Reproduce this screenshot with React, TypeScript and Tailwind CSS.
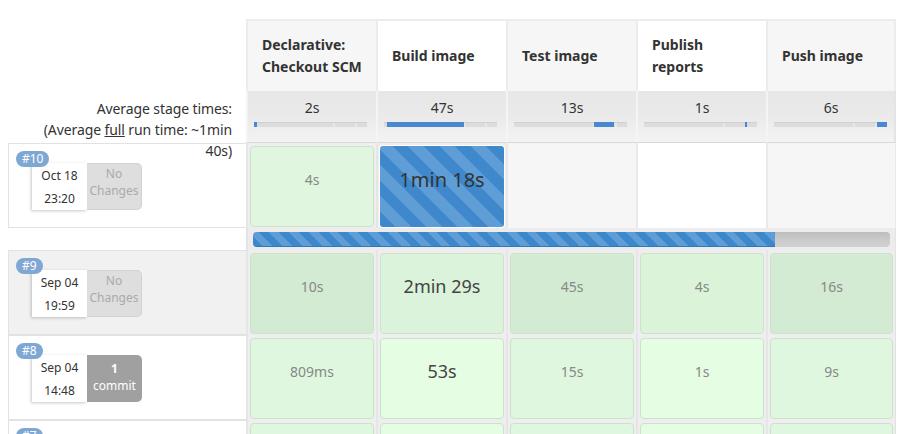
import React from 'react';

const FONT = { fontFamily: '"Noto Sans", "Open Sans", sans-serif' };

const BAR_STRIPES =
  'bg-[repeating-linear-gradient(45deg,#3d87cb_0,#3d87cb_7px,#5f9dd6_7px,#5f9dd6_14px)]';
const CELL_STRIPES =
  'bg-[repeating-linear-gradient(45deg,#3f88cc_0,#3f88cc_11px,#5f9dd6_11px,#5f9dd6_22px)]';

const stages = [
  'Declarative: Checkout SCM',
  'Build image',
  'Test image',
  'Publish reports',
  'Push image',
];

const headerBg = ['bg-[#f6f6f6]', 'bg-white', 'bg-[#f6f6f6]', 'bg-white', 'bg-[#f6f6f6]'];

// blue segment of each mini bar, px offsets within a 113px track
const averages = [
  { time: '2s', left: 0, width: 3 },
  { time: '47s', left: 3, width: 77 },
  { time: '13s', left: 80, width: 20 },
  { time: '1s', left: 101, width: 2 },
  { time: '6s', left: 103, width: 10 },
];

type Cell = { text: string; bg: string; big?: boolean };

interface Run {
  id: string;
  date: string;
  time: string;
  changes: 'none' | string;
  rowBg: string;
  cells: Cell[];
}

const runs: Run[] = [
  {
    id: '#9',
    date: 'Sep 04',
    time: '19:59',
    changes: 'none',
    rowBg: 'bg-[#f1f1f1]',
    cells: [
      { text: '10s', bg: 'bg-[#d3ebd2]' },
      { text: '2min 29s', bg: 'bg-[#dbf3da]', big: true },
      { text: '45s', bg: 'bg-[#d3ebd2]' },
      { text: '4s', bg: 'bg-[#daf3d9]' },
      { text: '16s', bg: 'bg-[#d3ebd2]' },
    ],
  },
  {
    id: '#8',
    date: 'Sep 04',
    time: '14:48',
    changes: '1',
    rowBg: 'bg-white',
    cells: [
      { text: '809ms', bg: 'bg-[#dff7de]' },
      { text: '53s', bg: 'bg-[#e4fde3]', big: true },
      { text: '15s', bg: 'bg-[#dff7de]' },
      { text: '1s', bg: 'bg-[#e4fde3]' },
      { text: '9s', bg: 'bg-[#dff7de]' },
    ],
  },
  {
    id: '#7',
    date: 'Sep 04',
    time: '11:02',
    changes: 'none',
    rowBg: 'bg-white',
    cells: [
      { text: '5s', bg: 'bg-[#dff7de]' },
      { text: '51s', bg: 'bg-[#e4fde3]', big: true },
      { text: '14s', bg: 'bg-[#dff7de]' },
      { text: '1s', bg: 'bg-[#e4fde3]' },
      { text: '8s', bg: 'bg-[#dff7de]' },
    ],
  },
];

function RunInfo({ run }: { run: Pick<Run, 'id' | 'date' | 'time' | 'changes' | 'rowBg'> }) {
  return (
    <div className={`h-[85px] border border-r-0 border-[#e2e2e2] ${run.rowBg} flex flex-col pl-[7px] pt-[7px]`}>
      <span className="relative z-10 self-start h-[16px] px-[6px] rounded-full bg-[#7fa7d4] text-white text-[12px] leading-[16px]">
        {run.id}
      </span>
      <div className="flex ml-[16px] -mt-[4px]">
        <div className="w-[55px] h-[47px] bg-white shadow-[-1px_1px_3px_rgba(0,0,0,0.22)] flex flex-col items-center justify-center text-[12px] leading-[23px] text-[#333]">
          <span>{run.date}</span>
          <span>{run.time}</span>
        </div>
        {run.changes === 'none' ? (
          <div className="w-[55px] h-[47px] bg-[#dedede] rounded-r-[5px] border border-l-0 border-[#d2d2d2] flex flex-col items-center justify-center pb-[10px] text-[12px] leading-[17px] text-[#aaa]">
            <span>No</span>
            <span>Changes</span>
          </div>
        ) : (
          <div className="w-[55px] h-[47px] bg-[#a0a0a0] rounded-r-[5px] flex flex-col items-center justify-center pb-[4px] text-[12px] leading-[17px] text-white">
            <span className="font-bold">{run.changes}</span>
            <span>commit</span>
          </div>
        )}
      </div>
    </div>
  );
}

function StageCell({ cell, last }: { cell: Cell; last: boolean }) {
  return (
    <div className={`h-[85px] bg-[#eeeeee] border-l-2 border-[#e6e6e6] ${last ? 'border-r border-r-[#e2e2e2]' : ''} px-[2px] pt-[3px] pb-[1px]`}>
      <div
        className={`h-full rounded-[4px] border border-[#cde2cc] ${cell.bg} flex items-center justify-center pb-[14px] ${
          cell.big ? 'text-[18px] text-[#444]' : 'text-[14px] text-[#888]'
        }`}
      >
        {cell.text}
      </div>
    </div>
  );
}

export default function App() {
  return (
    <div className="w-[902px] h-[434px] overflow-hidden bg-white text-[#333]" style={FONT}>
      <div className="ml-[8px] mt-[19px] grid grid-cols-[238px_repeat(5,130px)]">
        {/* stage names */}
        <div />
        {stages.map((name, i) => (
          <div
            key={name}
            className={`h-[72px] ${headerBg[i]} border-t-2 border-l-2 border-[#ececec] ${i === 4 ? 'border-r-2' : ''} flex items-center pl-[14px] pr-[10px] font-bold text-[14px] leading-[22px] text-[#333]`}
          >
            {name}
          </div>
        ))}

        {/* average times */}
        <div className="relative z-10 h-[52px] pt-[7px] pr-[14px] text-[14px] leading-[21px] text-[#333] text-right">
          <div className="w-[196px] ml-auto tracking-[-0.1px]">
            Average stage times:
            <br />
            (Average <span className="underline">full</span> run time: ~1min 40s)
          </div>
        </div>
        {averages.map((a, i) => (
          <div
            key={i}
            className={`h-[52px] bg-gradient-to-b from-[#e7e7e7] via-[#eaeaea] to-[#f3f3f3] border-l-2 border-[#f4f4f4] border-b border-b-[#d8d8d8] ${i === 4 ? 'border-r-2 border-r-[#e4e4e4]' : ''} pt-[7px] pl-[6px] flex flex-col`}
          >
            <span className="text-[14px] leading-[20px] text-center pr-[6px]">{a.time}</span>
            <div className="relative mt-[4px] w-[113px] h-[5px] bg-[#dcdcdc] border-t border-[#d0d0d0]">
              <span className="absolute top-0 bottom-0 left-[79px] w-[2px] bg-[#e8e8e8]" />
              <span className="absolute top-0 bottom-0 left-[101px] w-[2px] bg-[#e8e8e8]" />
              <span
                className="absolute -top-px bottom-0 bg-[#4a88d0]"
                style={{ left: a.left, width: a.width }}
              />
            </div>
          </div>
        ))}

        {/* running build #10 */}
        <RunInfo run={{ id: '#10', date: 'Oct 18', time: '23:20', changes: 'none', rowBg: 'bg-white' }} />
        <StageCell cell={{ text: '4s', bg: 'bg-[#e0f6df]' }} last={false} />
        <div className="h-[85px] bg-[#eeeeee] border-l-2 border-[#e6e6e6] px-[2px] pt-[3px] pb-[1px]">
          <div className={`h-full rounded-[3px] ring-1 ring-white ${CELL_STRIPES} flex items-center justify-center pb-[14px] text-[20px] text-[#333]`}>
            1min 18s
          </div>
        </div>
        <div className="h-[85px] bg-[#f6f6f6] border-l-2 border-[#e9e9e9]" />
        <div className="h-[85px] bg-white border-l-2 border-[#e9e9e9]" />
        <div className="h-[85px] bg-[#f6f6f6] border-l-2 border-r border-[#e9e9e9]" />

        {/* overall progress */}
        <div className="h-[22px]" />
        <div className="col-span-5 h-[22px] bg-[#ececec] border-l-2 border-r border-[#e4e4e4] px-[5px] pt-[4px]">
          <div className="h-[15px] rounded-[4px] bg-gradient-to-b from-[#bdbdbd] via-[#cacaca] to-[#d2d2d2] overflow-hidden">
            <div className={`h-full w-[82%] ${BAR_STRIPES} border-b border-[#2f78bd]`} />
          </div>
        </div>

        {runs.map((run) => (
          <React.Fragment key={run.id}>
            <RunInfo run={run} />
            {run.cells.map((c, i) => (
              <StageCell key={i} cell={c} last={i === 4} />
            ))}
          </React.Fragment>
        ))}
      </div>
    </div>
  );
}
